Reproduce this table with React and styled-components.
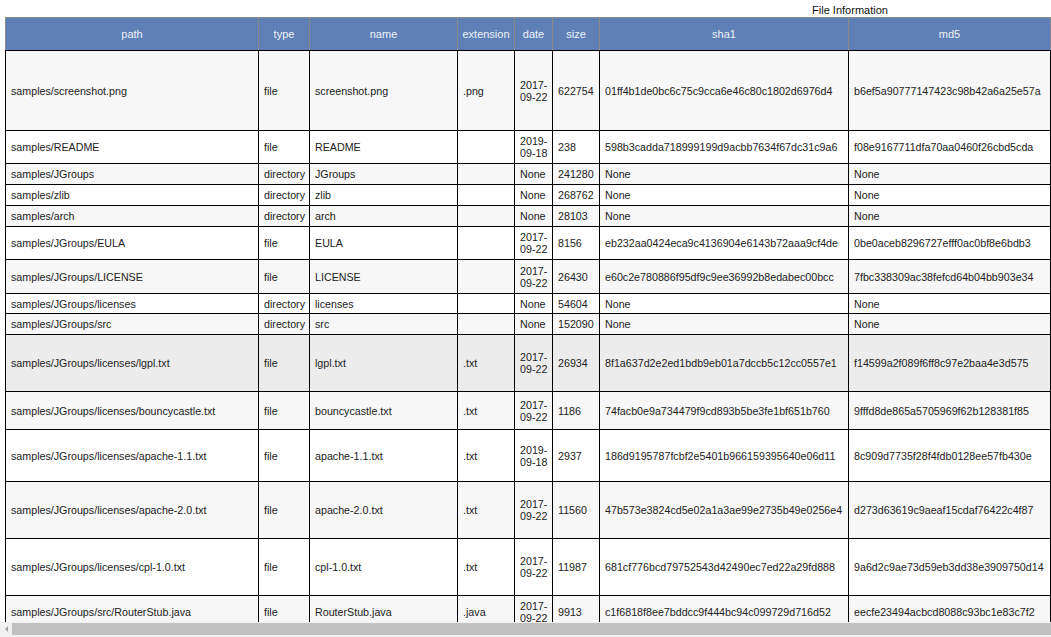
import React from 'react'
import styled, { createGlobalStyle } from 'styled-components'

const GlobalStyle = createGlobalStyle`
    html, body {
        margin: 0;
        padding: 0;
        overflow: hidden;
        background: #fff;
    }
    body {
        font-family: "Liberation Sans", Arial, sans-serif;
    }
`

// the scroll box is wider than the window, so its right end is cut off
const Scroller = styled.div`
    width: 1690px;
    height: 637px;
    display: flex;
    flex-direction: column;
`

const Viewport = styled.div`
    flex: 1;
    overflow: hidden;
`

const ScrollBar = styled.div`
    height: 15px;
    flex: none;
    display: flex;
    align-items: stretch;
    background: #f1f1f1;
`

const ScrollButton = styled.div`
    width: 12px;
    flex: none;
    display: flex;
    align-items: center;
    justify-content: center;
    padding-bottom: 2px;
    box-sizing: border-box;
`

const Arrow = styled.div`
    width: 0;
    height: 0;
    border-top: 3px solid transparent;
    border-bottom: 3px solid transparent;
    border-right: 3px solid #a3a3a3;
`

const Thumb = styled.div`
    flex: 1;
    margin: 1px 14px 2px 0;
    background: #c1c1c1;
`

const Content = styled.div`
    width: 1700px;
    box-sizing: border-box;
    padding: 0 5px;
`

const Title = styled.div`
    font-size: 11px;
    line-height: 13px;
    padding-top: 4px;
    color: #111;
    text-align: center;
`

const Table = styled.table`
    width: 1046px;
    table-layout: fixed;
    border-collapse: collapse;
    font-size: 10.7px;
    color: #222;
`

const HeadCell = styled.th`
    height: 32px;
    padding: 0 4px;
    background: #5e80b7;
    color: #eef2f8;
    font-size: 11px;
    font-weight: normal;
    text-align: center;
    border: 1px solid #8a8a8a;
    border-bottom: 1px solid #000;
    white-space: nowrap;
    overflow: hidden;
`

const Row = styled.tr`
    height: ${(p) => p.$h}px;
    background: ${(p) => (p.$hover ? '#ececec' : p.$odd ? '#f7f7f7' : '#fff')};
`

const Cell = styled.td`
    padding: 0 3px 0 5px;
    border: 1px solid #000;
    vertical-align: middle;
    text-align: left;
    overflow: hidden;
`

const columns = [
    { key: 'path', w: 253 },
    { key: 'type', w: 51 },
    { key: 'name', w: 148 },
    { key: 'extension', w: 57 },
    { key: 'date', w: 38 },
    { key: 'size', w: 47 },
    { key: 'sha1', w: 249 },
    { key: 'md5', w: 202 },
]

const rows = [
    ['samples/screenshot.png', 'file', 'screenshot.png', '.png', '2017-09-22', '622754', '01ff4b1de0bc6c75c9cca6e46c80c1802d6976d4', 'b6ef5a90777147423c98b42a6a25e57a', 80],
    ['samples/README', 'file', 'README', '', '2019-09-18', '238', '598b3cadda718999199d9acbb7634f67dc31c9a6', 'f08e9167711dfa70aa0460f26cbd5cda', 33],
    ['samples/JGroups', 'directory', 'JGroups', '', 'None', '241280', 'None', 'None', 21],
    ['samples/zlib', 'directory', 'zlib', '', 'None', '268762', 'None', 'None', 21],
    ['samples/arch', 'directory', 'arch', '', 'None', '28103', 'None', 'None', 21],
    ['samples/JGroups/EULA', 'file', 'EULA', '', '2017-09-22', '8156', 'eb232aa0424eca9c4136904e6143b72aaa9cf4de', '0be0aceb8296727efff0ac0bf8e6bdb3', 33],
    ['samples/JGroups/LICENSE', 'file', 'LICENSE', '', '2017-09-22', '26430', 'e60c2e780886f95df9c9ee36992b8edabec00bcc', '7fbc338309ac38fefcd64b04bb903e34', 34],
    ['samples/JGroups/licenses', 'directory', 'licenses', '', 'None', '54604', 'None', 'None', 20],
    ['samples/JGroups/src', 'directory', 'src', '', 'None', '152090', 'None', 'None', 21],
    ['samples/JGroups/licenses/lgpl.txt', 'file', 'lgpl.txt', '.txt', '2017-09-22', '26934', '8f1a637d2e2ed1bdb9eb01a7dccb5c12cc0557e1', 'f14599a2f089f6ff8c97e2baa4e3d575', 57],
    ['samples/JGroups/licenses/bouncycastle.txt', 'file', 'bouncycastle.txt', '.txt', '2017-09-22', '1186', '74facb0e9a734479f9cd893b5be3fe1bf651b760', '9fffd8de865a5705969f62b128381f85', 38],
    ['samples/JGroups/licenses/apache-1.1.txt', 'file', 'apache-1.1.txt', '.txt', '2019-09-18', '2937', '186d9195787fcbf2e5401b966159395640e06d11', '8c909d7735f28f4fdb0128ee57fb430e', 52],
    ['samples/JGroups/licenses/apache-2.0.txt', 'file', 'apache-2.0.txt', '.txt', '2017-09-22', '11560', '47b573e3824cd5e02a1a3ae99e2735b49e0256e4', 'd273d63619c9aeaf15cdaf76422c4f87', 57],
    ['samples/JGroups/licenses/cpl-1.0.txt', 'file', 'cpl-1.0.txt', '.txt', '2017-09-22', '11987', '681cf776bcd79752543d42490ec7ed22a29fd888', '9a6d2c9ae73d59eb3dd38e3909750d14', 57],
    ['samples/JGroups/src/RouterStub.java', 'file', 'RouterStub.java', '.java', '2017-09-22', '9913', 'c1f6818f8ee7bddcc9f444bc94c099729d716d52', 'eecfe23494acbcd8088c93bc1e83c7f2', 33],
]

// row 10 (lgpl.txt) is shown under the mouse
const HOVER_ROW = 9

export default function App() {
    return (
        <>
            <GlobalStyle />
            <Scroller>
                <Viewport>
                    <Content>
                        <Title>File Information</Title>
                        <Table>
                            <colgroup>
                                {columns.map((c) => (
                                    <col key={c.key} style={{ width: c.w }} />
                                ))}
                            </colgroup>
                            <thead>
                                <tr>
                                    {columns.map((c) => (
                                        <HeadCell key={c.key}>{c.key}</HeadCell>
                                    ))}
                                </tr>
                            </thead>
                            <tbody>
                                {rows.map((r, i) => (
                                    <Row
                                        key={r[0]}
                                        $h={r[8]}
                                        $odd={i % 2 === 0}
                                        $hover={i === HOVER_ROW}
                                    >
                                        {r.slice(0, 8).map((v, j) => (
                                            <Cell key={j}>{v}</Cell>
                                        ))}
                                    </Row>
                                ))}
                            </tbody>
                        </Table>
                    </Content>
                </Viewport>
                <ScrollBar>
                    <ScrollButton>
                        <Arrow />
                    </ScrollButton>
                    <Thumb />
                </ScrollBar>
            </Scroller>
        </>
    )
}
